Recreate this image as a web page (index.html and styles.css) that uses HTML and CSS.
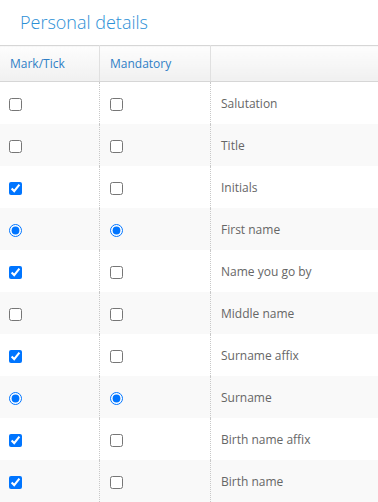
FILE: index.html
```html
<!DOCTYPE html>
<html>
<head>
    <title>Personal details</title>
    <link rel="stylesheet" href="styles.css">
</head>
<body>

<h2 class="page-title">Personal details</h2>

<table class="fields">
    <tr>
        <th class="col-mark">Mark/Tick</th>
        <th class="col-mand">Mandatory</th>
        <th></th>
    </tr>
    <tr>
        <td><input type="checkbox"></td>
        <td><input type="checkbox"></td>
        <td>Salutation</td>
    </tr>
    <tr>
        <td><input type="checkbox"></td>
        <td><input type="checkbox"></td>
        <td>Title</td>
    </tr>
    <tr>
        <td><input type="checkbox" checked></td>
        <td><input type="checkbox"></td>
        <td>Initials</td>
    </tr>
    <tr>
        <td><input type="radio" name="first_mark" checked></td>
        <td><input type="radio" name="first_mand" checked></td>
        <td>First name</td>
    </tr>
    <tr>
        <td><input type="checkbox" checked></td>
        <td><input type="checkbox"></td>
        <td>Name you go by</td>
    </tr>
    <tr>
        <td><input type="checkbox"></td>
        <td><input type="checkbox"></td>
        <td>Middle name</td>
    </tr>
    <tr>
        <td><input type="checkbox" checked></td>
        <td><input type="checkbox"></td>
        <td>Surname affix</td>
    </tr>
    <tr>
        <td><input type="radio" name="sur_mark" checked></td>
        <td><input type="radio" name="sur_mand" checked></td>
        <td>Surname</td>
    </tr>
    <tr>
        <td><input type="checkbox" checked></td>
        <td><input type="checkbox"></td>
        <td>Birth name affix</td>
    </tr>
    <tr>
        <td><input type="checkbox" checked></td>
        <td><input type="checkbox"></td>
        <td>Birth name</td>
    </tr>
</table>

</body>
</html>
```

FILE: styles.css
```css
body {
    margin: 0;
    font-family: 'Open Sans', 'Noto Sans', sans-serif;
    font-size: 12px;
    color: #666;
    background: #fff;
}

h2.page-title {
    margin: 0;
    height: 45px;
    padding: 10px 0 0 20px;
    box-sizing: border-box;
    font-size: 18px;
    font-weight: 300;
    line-height: 24px;
    color: #2b8fd6;
}

table.fields {
    width: 100%;
    border-collapse: collapse;
}

table.fields th {
    height: 35px;
    padding: 0 0 0 10px;
    text-align: left;
    font-weight: normal;
    color: #2f7fc6;
    background: linear-gradient(#fdfdfd, #f0f0f0);
    border-top: 1px solid #d6d6d6;
    border-bottom: 1px solid #d6d6d6;
    border-right: 1px solid #e0e0e0;
}

th.col-mark {
    width: 89px;
}

th.col-mand {
    width: 100px;
}

table.fields tr th:last-child,
table.fields tr td:last-child {
    border-right: none;
}

table.fields td {
    height: 42px;
    padding: 0 0 0 10px;
    border-right: 1px dotted #c8c8c8;
    vertical-align: middle;
}

table.fields td:first-child {
    padding-left: 9px;
}

table.fields tr:nth-child(odd) td {
    background: #f9f9f9;
}

table.fields input {
    margin: 0;
    width: 13px;
    height: 13px;
    vertical-align: middle;
}
```
